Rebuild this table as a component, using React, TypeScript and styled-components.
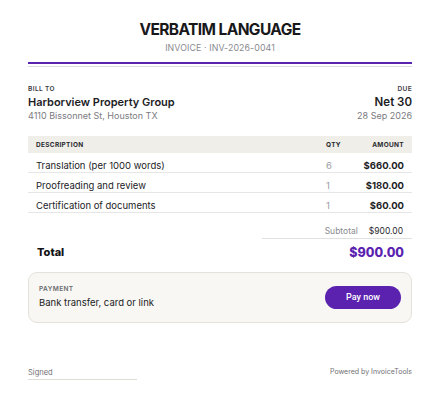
import React from "react";
import styled, { createGlobalStyle } from "styled-components";

const Global = createGlobalStyle`
  html, body { margin: 0; padding: 0; background: #ffffff; }
  body { font-family: Inter, "Noto Sans", sans-serif; color: #1c1c1f; -webkit-font-smoothing: antialiased; }
  * { box-sizing: border-box; }
`;

const PURPLE = "#5b22b0";

const Page = styled.div`
  width: 440px;
  height: 404px;
  padding: 20px 28px 0 28px;
  display: flex;
  flex-direction: column;
`;

const Header = styled.header`
  display: flex;
  flex-direction: column;
  align-items: center;
`;

const Title = styled.h1`
  margin: 0;
  font-size: 15.5px;
  line-height: 20px;
  font-weight: 700;
  letter-spacing: -0.6px;
  color: #18181b;
`;

const Subtitle = styled.div`
  margin-top: 2px;
  font-size: 8.8px;
  line-height: 12px;
  color: #8a8a8f;
  letter-spacing: 0.1px;
`;

const Rule = styled.div`
  margin-top: 8px;
  border-top: 2px solid ${PURPLE};
  padding-top: 2px;
  &::after {
    content: "";
    display: block;
    border-top: 1px solid #dcdcdc;
  }
`;

const BillRow = styled.section`
  margin-top: 18px;
  display: flex;
  justify-content: space-between;
`;

const Col = styled.div<{ $right?: boolean }>`
  display: flex;
  flex-direction: column;
  align-items: ${(p) => (p.$right ? "flex-end" : "flex-start")};
`;

const Label = styled.div`
  font-size: 6.5px;
  line-height: 8px;
  font-weight: 600;
  letter-spacing: 0.4px;
  color: #3a3a3f;
  text-transform: uppercase;
`;

const Strong = styled.div<{ $big?: boolean }>`
  margin-top: 2px;
  font-size: ${(p) => (p.$big ? "11.5px" : "11px")};
  line-height: 14px;
  font-weight: 600;
  color: #1c1c1f;
`;

const Muted = styled.div`
  font-size: 9px;
  line-height: 13px;
  color: #7a7a80;
`;

const Table = styled.div`
  margin-top: 14px;
  display: flex;
  flex-direction: column;
`;

const GRID = "1fr 30px 48px";

const HeadRow = styled.div`
  display: grid;
  grid-template-columns: ${GRID};
  align-items: center;
  height: 17px;
  padding: 0 8px;
  background: #efeee9;
  font-size: 6.5px;
  font-weight: 700;
  letter-spacing: 0.3px;
  color: #2a2a2e;
`;

const Row = styled.div`
  display: grid;
  grid-template-columns: ${GRID};
  align-items: center;
  height: 20px;
  padding: 6px 8px 0 8px;
  border-bottom: 1px solid #e6e6e6;
  font-size: 9.5px;
  color: #1c1c1f;
`;

const Qty = styled.span<{ $head?: boolean }>`
  color: ${(p) => (p.$head ? "#2a2a2e" : "#9a9a9f")};
`;

const Amount = styled.span`
  text-align: right;
  font-weight: 700;
`;

const SubtotalRow = styled.div`
  margin-top: 12px;
  align-self: flex-end;
  width: 150px;
  display: flex;
  justify-content: flex-end;
  gap: 11px;
  padding: 0 9px 1px 0;
  line-height: 12px;
  font-size: 8.5px;
  border-bottom: 1px solid #e0e0e0;
`;

const SubLabel = styled.span`
  color: #8a8a8f;
`;

const SubValue = styled.span`
  color: #2a2a2e;
`;

const TotalRow = styled.div`
  margin-top: 5px;
  display: flex;
  justify-content: space-between;
  align-items: center;
  height: 16px;
  padding: 0 8px 0 9px;
`;

const TotalLabel = styled.span`
  font-size: 11px;
  font-weight: 800;
  color: #141416;
`;

const TotalValue = styled.span`
  font-size: 12.5px;
  font-weight: 800;
  color: ${PURPLE};
`;

const PaymentBox = styled.div`
  margin-top: 12px;
  height: 51px;
  display: flex;
  align-items: center;
  justify-content: space-between;
  padding: 0 10px 0 10px;
  background: #f8f7f3;
  border: 1px solid #e4e2da;
  border-radius: 9px;
`;

const PayInfo = styled.div`
  display: flex;
  flex-direction: column;
  gap: 4px;
  margin-top: -1px;
`;

const PayLabel = styled(Label)`
  color: #6a6a70;
`;

const PayText = styled.div`
  font-size: 9.5px;
  line-height: 12px;
  color: #1c1c1f;
`;

const PayButton = styled.button`
  width: 76px;
  height: 23px;
  border: none;
  border-radius: 12px;
  background: ${PURPLE};
  color: #ffffff;
  font-family: Roboto, Inter, sans-serif;
  font-size: 9px;
  font-weight: 500;
  cursor: pointer;
  padding: 0 0 1px 0;
`;

const Footer = styled.footer`
  margin-top: 44px;
  display: flex;
  justify-content: space-between;
  align-items: flex-start;
`;

const Signed = styled.div`
  width: 109px;
  font-size: 7.5px;
  line-height: 12px;
  color: #6f6f74;
  border-bottom: 1px solid #dedcd5;
`;

const Powered = styled.div`
  font-size: 7px;
  line-height: 12px;
  color: #6f6f74;
  margin-top: -1px;
`;

const items = [
  { desc: "Translation (per 1000 words)", qty: 6, amount: "$660.00" },
  { desc: "Proofreading and review", qty: 1, amount: "$180.00" },
  { desc: "Certification of documents", qty: 1, amount: "$60.00" },
];

export default function App() {
  return (
    <>
      <Global />
      <Page>
        <Header>
          <Title>VERBATIM LANGUAGE</Title>
          <Subtitle>INVOICE · INV-2026-0041</Subtitle>
        </Header>
        <Rule />
        <BillRow>
          <Col>
            <Label>Bill to</Label>
            <Strong>Harborview Property Group</Strong>
            <Muted>4110 Bissonnet St, Houston TX</Muted>
          </Col>
          <Col $right>
            <Label>Due</Label>
            <Strong $big>Net 30</Strong>
            <Muted>28 Sep 2026</Muted>
          </Col>
        </BillRow>
        <Table>
          <HeadRow>
            <span>DESCRIPTION</span>
            <Qty $head>QTY</Qty>
            <Amount>AMOUNT</Amount>
          </HeadRow>
          {items.map((it) => (
            <Row key={it.desc}>
              <span>{it.desc}</span>
              <Qty>{it.qty}</Qty>
              <Amount>{it.amount}</Amount>
            </Row>
          ))}
          <SubtotalRow>
            <SubLabel>Subtotal</SubLabel>
            <SubValue>$900.00</SubValue>
          </SubtotalRow>
          <TotalRow>
            <TotalLabel>Total</TotalLabel>
            <TotalValue>$900.00</TotalValue>
          </TotalRow>
        </Table>
        <PaymentBox>
          <PayInfo>
            <PayLabel>Payment</PayLabel>
            <PayText>Bank transfer, card or link</PayText>
          </PayInfo>
          <PayButton>Pay now</PayButton>
        </PaymentBox>
        <Footer>
          <Signed>Signed</Signed>
          <Powered>Powered by InvoiceTools</Powered>
        </Footer>
      </Page>
    </>
  );
}
